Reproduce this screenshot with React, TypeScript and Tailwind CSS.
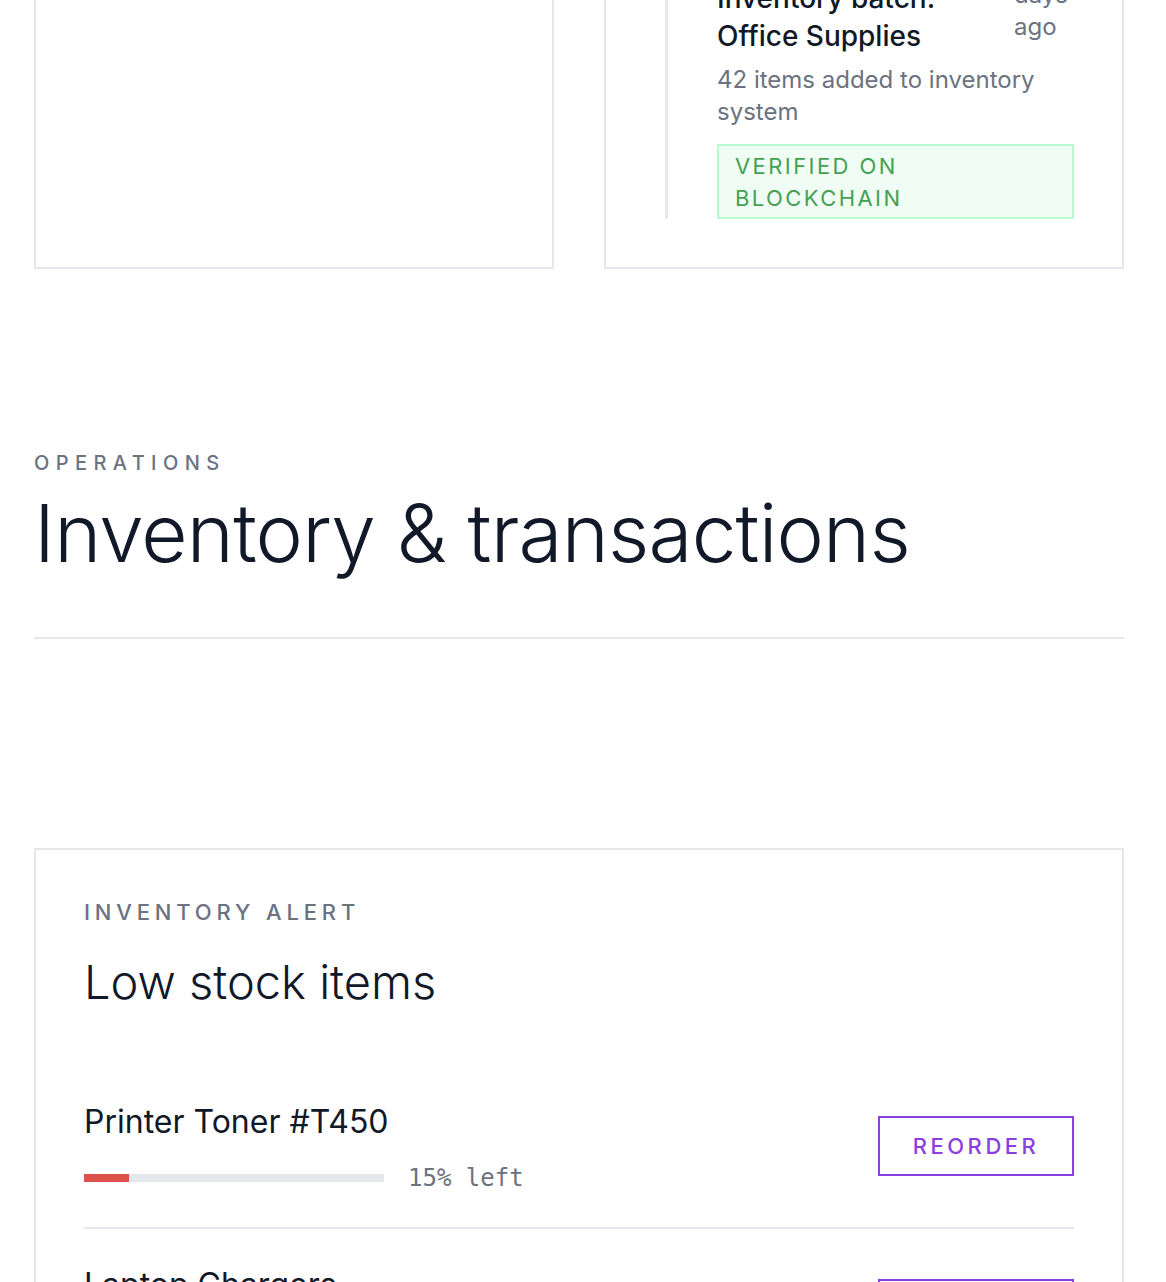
import React from "react";

const items = [
  { name: "Printer Toner #T450", pct: 15 },
  { name: "Laptop Chargers", pct: 22 },
];

export default function App() {
  return (
    <div className="min-h-screen bg-white font-['Inter',sans-serif] text-[#111827] overflow-hidden">
      <div className="ml-[34px] w-[1090px] pb-20">
        {/* top cards (scrolled) */}
        <div className="-mt-[71px] grid grid-cols-2 gap-[50px]">
          <div className="border-2 border-[#e5e7eb] bg-white" />
          <div className="border-2 border-[#e5e7eb] bg-white px-12 pb-12 pt-12">
            <div className="ml-[11px] border-l-[3px] border-[#e5e7eb] pl-[49px]">
              <div className="flex items-start justify-between gap-6">
                <div className="w-[270px] text-[28px] font-medium leading-[38px] text-[#111827]">
                  Inventory batch: Office Supplies
                </div>
                <div className="-mt-[32px] w-[60px] text-[24px] leading-[32px] text-[#6b7280]">2 days ago</div>
              </div>
              <p className="mt-[9px] text-[24px] leading-[32px] text-[#6b7280]">
                42 items added to inventory system
              </p>
              <div className="mt-4 border-2 border-[#bbf7d0] bg-[#f0fdf4] px-4 py-[3.5px] text-[22px] leading-[32px] tracking-[0.11em] text-[#45a052]">
                VERIFIED ON BLOCKCHAIN
              </div>
            </div>
          </div>
        </div>

        {/* section header */}
        <div className="mt-[180px] border-b-2 border-[#e5e7eb] pb-[60px]">
          <div className="text-[20px] font-medium leading-[28px] tracking-[0.32em] text-[#6b7280]">OPERATIONS</div>
          <h1 className="mt-3 text-[80px] font-light leading-[88px] tracking-[-0.01em] text-[#111827]">
            Inventory &amp; transactions
          </h1>
        </div>

        {/* low stock card */}
        <div className="mt-[209px] border-2 border-[#e5e7eb] bg-white p-12">
          <div className="text-[22px] font-medium leading-[28px] tracking-[0.22em] text-[#6b7280]">
            INVENTORY ALERT
          </div>
          <h2 className="mt-[27px] text-[47px] font-light leading-[58px] text-[#111827]">Low stock items</h2>
          <div className="mt-[55px]">
            {items.map((it, i) => (
              <div
                key={it.name}
                className={
                  "flex items-center justify-between pt-[36px] pb-[33px] " +
                  (i < items.length - 1 ? "border-b-2 border-[#e5e7eb]" : "")
                }
              >
                <div>
                  <div className="text-[32px] leading-[40px] text-[#111827]">{it.name}</div>
                  <div className="mt-[20px] flex items-center gap-6">
                    <div className="h-[8px] w-[300px] bg-[#e5e7eb]">
                      <div className="h-full bg-[#de524c]" style={{ width: `${it.pct}%` }} />
                    </div>
                    <span className="font-['DejaVu_Sans_Mono',monospace] text-[24px] leading-[32px] text-[#6b7280]">
                      {it.pct}% left
                    </span>
                  </div>
                </div>
                <button className="-mt-[4px] h-[60px] w-[196px] border-2 border-[#8b3fe0] text-[22px] font-medium tracking-[0.16em] text-[#8b3fe0]">
                  REORDER
                </button>
              </div>
            ))}
          </div>
        </div>
      </div>
    </div>
  );
}
